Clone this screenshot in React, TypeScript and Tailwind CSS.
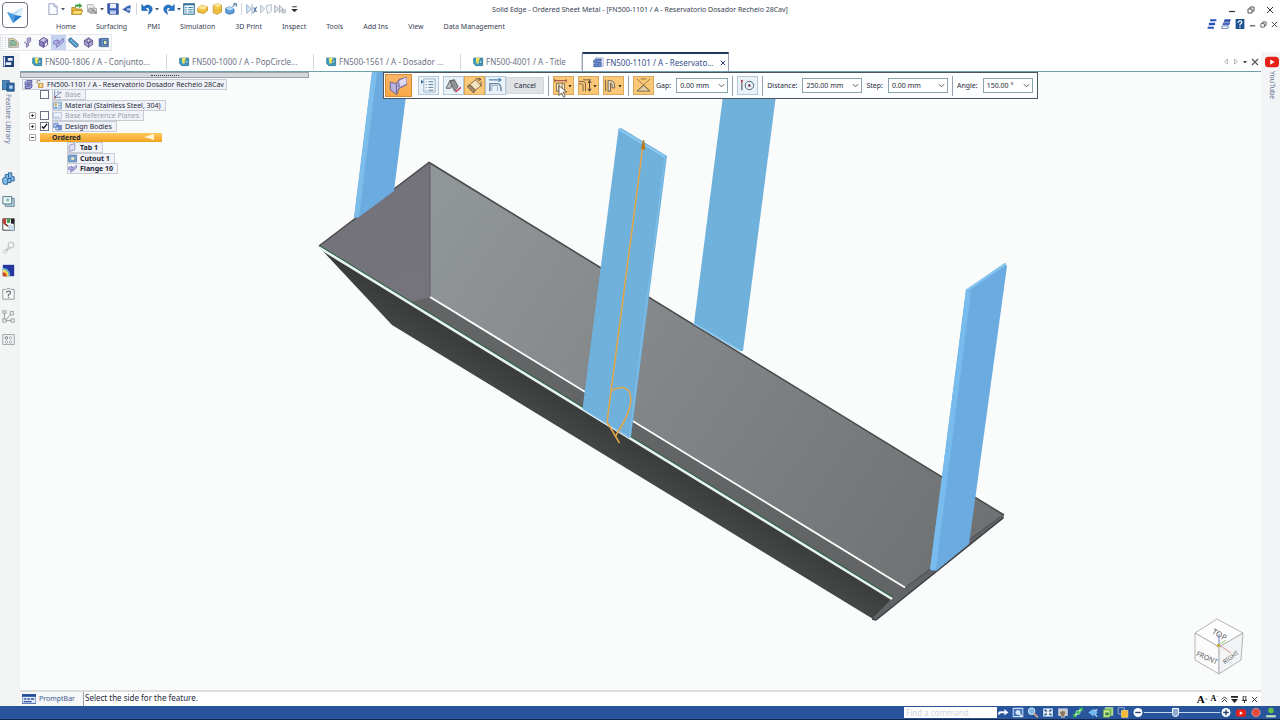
import { useState } from "react";
import type { ReactNode } from "react";

const icons: Record<string, ReactNode> = {
  newDoc: (
    <>
      <path d="M2.5 1h7l4 4v10.5h-11z" fill="#fbfcff" stroke="#7485ac" />
      <path d="M9.5 1v4h4" fill="#dfe6f4" stroke="#7485ac" />
    </>
  ),
  open: (
    <>
      <path d="M1 6h5l1 2h7v7H1z" fill="#e9b83c" stroke="#a4781c" />
      <path d="M4 10h12l-3 5H1z" fill="#ffdf72" stroke="#b1882a" />
      <path d="M5 6c0-4 3-5 6-4V0l4 4-4 3V5c-2-1-4 0-6 1z" fill="#3aa33a" />
    </>
  ),
  print: (
    <>
      <path d="M2 2h7l2 3v7H2z" fill="#ececec" stroke="#a2a2a2" />
      <path d="M6 7h8v7H6z" fill="#d2d2d2" stroke="#999" />
      <circle cx="6" cy="10" r="3" fill="#bdbdbd" stroke="#8f8f8f" />
      <path d="M9 9l5 5" stroke="#888" strokeWidth="2" />
    </>
  ),
  save: (
    <>
      <path d="M1 1h14v14H3l-2-2z" fill="#3f62b5" stroke="#27408a" />
      <path d="M4 1h8v6H4z" fill="#e6ecfa" />
      <path d="M4 10h8v5H4z" fill="#b9c8ea" />
    </>
  ),
  drop: (
    <>
      <path d="M1 9c4-2 7-6 12-6l-1 10c-3 1-5-3-11-4z" fill="#3d67b0" />
      <path d="M8 7h4v3H8z" fill="#b9cdf0" />
    </>
  ),
  undo: <path d="M1 2v8h8L6 7c3-2 6 0 5 4l-1 4c5-3 6-7 4-10-3-3-7-3-10 0z" fill="#2377cd" stroke="#134f98" strokeWidth=".7" />,
  redo: <path d="M15 2v8H7l3-3C7 5 4 7 5 11l1 4C1 12 0 8 2 5c3-3 7-3 10 0z" fill="#2377cd" stroke="#134f98" strokeWidth=".7" />,
  list: (
    <>
      <path d="M1 1h14v14H1z" fill="#e9f5fb" stroke="#35708f" strokeWidth="1.5" />
      <path d="M1 2h14" stroke="#35708f" strokeWidth="2" />
      <path d="M3 6h2M3 9h2M3 12h2M7 6h6M7 9h6M7 12h6" stroke="#3f87a6" strokeWidth="1.4" />
    </>
  ),
  yellowPart: (
    <>
      <path d="M1 7l5-4 8 2v5l-5 4-8-2z" fill="#f0bf3d" stroke="#c08a1b" />
      <path d="M1 7l5-4 8 2-5 4z" fill="#ffe58e" />
    </>
  ),
  yellowCyl: (
    <>
      <path d="M3 3l6-2 5 2v9l-6 3-5-2z" fill="#f3c64a" stroke="#c08a1b" />
      <path d="M3 3l6-2 5 2-6 2z" fill="#ffedaa" />
      <path d="M3 9l5 2 6-3" stroke="#d69d2a" fill="none" />
    </>
  ),
  bluePart: (
    <>
      <path d="M1 7l6-2 5 3v5l-6 2-5-2z" fill="#5c9fdc" stroke="#2d68aa" />
      <path d="M1 7l6-2 5 3-6 2z" fill="#b6dcf8" />
      <path d="M10 5l4-4M11 1h4v4" stroke="#4c6e92" strokeWidth="1.4" fill="none" />
    </>
  ),
  mirror: (
    <>
      <path d="M1 2v12l6-6z" fill="#dbe9f8" stroke="#7d9fc4" />
      <path d="M8 1v14" stroke="#7593b1" />
      <path d="M10 6l4 6M14 5l-4 8" stroke="#4d7099" strokeWidth="1.5" />
    </>
  ),
  mirror2: (
    <>
      <path d="M1 3v10l5-5z" fill="#f0f4f9" stroke="#8fa3bd" />
      <path d="M8 4l7-2v9l-5 3z" fill="#f6f8fb" stroke="#9caabd" />
    </>
  ),
  mirror3: (
    <>
      <path d="M1 3v10l5-5zM7 3v10l5-5z" fill="#e9edf2" stroke="#8d99aa" />
      <path d="M11 9h4v4h-4z" fill="#dfe4ea" stroke="#8d99aa" />
    </>
  ),
  cloudPart: (
    <>
      <path d="M1 2h8l6 6v7H1z" fill="#ecd694" stroke="#7b8aa5" />
      <path d="M4 5h5l3 3v4H4z" fill="#8dbf9c" stroke="#4d7f94" />
      <path d="M1 2v13h4z" fill="#7ba7ad" opacity=".5" />
    </>
  ),
  bend: (
    <>
      <path d="M6 2l5-1v5l-3 3v4l-3 2v-5l2-3z" fill="#b5add8" stroke="#62589b" />
      <path d="M5 6l-3 2 4 3" stroke="#62589b" fill="none" />
    </>
  ),
  cubePart: (
    <>
      <path d="M2 5l6-4 6 3v7l-6 4-6-3z" fill="#8a80bd" stroke="#4a437f" />
      <path d="M2 5l6-4 6 3-6 4z" fill="#cbc5ea" stroke="#4a437f" />
      <path d="M8 8v7" stroke="#4a437f" />
      <path d="M10 10l3-2v3l-3 2z" fill="#fff" />
    </>
  ),
  dimple: (
    <>
      <path d="M2 5l6-4 6 4v6l-6 4-6-4z" fill="#a79fcf" stroke="#48417a" />
      <path d="M2 5l6 4 6-4M8 9v6" stroke="#48417a" />
      <circle cx="8" cy="5" r="1.800" fill="#fff" stroke="#48417a" />
    </>
  ),
  flange: (
    <>
      <path d="M1 6l6-2 2 3 6-5v5l-6 5-4 3v-4l-4-1z" fill="#b7b1e6" stroke="#6b63ad" />
      <path d="M7 4v4l-2 3M9 7v4" stroke="#6b63ad" fill="none" />
    </>
  ),
  hem: (
    <>
      <path d="M1 3l3-2 11 10-1 3-3 1L1 6z" fill="#4c97c9" stroke="#24487c" />
      <path d="M3 4l10 9" stroke="#bfe2f5" />
    </>
  ),
  cutBook: (
    <>
      <path d="M1 2h3v12H1z" fill="#4a74ac" />
      <path d="M4 2h11v12H4z" fill="#6590c4" stroke="#2a4b7d" />
      <path d="M8 5h5v6H8z" fill="#e0ebb7" stroke="#2a4b7d" />
    </>
  ),
  asm: (
    <>
      <path d="M1 3h13v11H4l-3-3z" fill="#3f9dc4" stroke="#286d88" />
      <path d="M4 3h6l-1 8H5z" fill="#f4e45a" />
      <path d="M9 6h4v5H9z" fill="#8fd0e8" stroke="#286d88" />
    </>
  ),
  sheet: (
    <>
      <path d="M4 1h11v13H4z" fill="#edf1fb" stroke="#9aabcf" />
      <path d="M1 5l3-2h8v3H5v2h7v5l-2 1H1v-3h7V9H1z" fill="#6c90ce" stroke="#2d4f99" />
    </>
  ),
  treeSheet: (
    <>
      <path d="M2 4l3-3h9v4H6v2h8v6l-3 2H2v-4h8V9H2z" fill="#a3a6de" stroke="#37377f" strokeWidth="1.3" />
    </>
  ),
  lock: (
    <>
      <path d="M2 7V3a3 3 0 016 0" fill="none" stroke="#6c522f" strokeWidth="1.5" />
      <path d="M5 7h9v8H5z" fill="#f0b64c" stroke="#a16e1d" />
      <path d="M8 9h3v4H8z" fill="#fff1cc" />
    </>
  ),
  axes: (
    <>
      <path d="M3 1v12h11M3 13l9-8" stroke="#526fa4" strokeWidth="1.5" fill="none" />
      <path d="M7 2h3v3H7zM12 3h3v3h-3z" fill="#7b8fba" />
      <path d="M2 12h3v3H2z" fill="#b34c4c" />
    </>
  ),
  material: (
    <>
      <path d="M1 2h14v12H1z" fill="#e8f2fa" stroke="#39719f" />
      <path d="M3 4h4v4H3z" fill="#e09b2d" />
      <path d="M3 10h4v3H3z" fill="#4e93c0" />
      <path d="M9 5h5M9 8h5M9 11h5" stroke="#39719f" />
    </>
  ),
  plane: (
    <>
      <path d="M1 3h14v11H1z" fill="#eef2fa" stroke="#8fa5cc" />
      <path d="M3 11h2M6 11h2M9 11h2" stroke="#6d86b5" strokeWidth="1.5" />
    </>
  ),
  bodies: (
    <>
      <path d="M1 2h8v8H1z" fill="#a7bdea" stroke="#4b67ab" />
      <path d="M7 6h8v8H7z" fill="#7694d3" stroke="#3a579e" />
      <path d="M5 9h5v5H5z" fill="#dbe5fa" stroke="#4b67ab" />
    </>
  ),
  tab: <path d="M2 4l10-3v11L2 15z" fill="#dfe0f4" stroke="#8083b0" strokeWidth="1.3" />,
  cutout: (
    <>
      <path d="M1 2h14v12H1z" fill="#89b3df" stroke="#3b6aa2" strokeWidth="1.3" />
      <path d="M5 5h7v6H5z" fill="#f5f0cc" stroke="#3b6aa2" />
    </>
  ),
  railTree: (
    <>
      <path d="M0 0h16v16H0z" fill="#213f78" />
      <path d="M7 3h7v4H7zM4 9h8v4H4z" fill="#e9eef8" />
      <path d="M2 1v14" stroke="#e9eef8" strokeWidth="2" />
    </>
  ),
  railLib: (
    <>
      <path d="M0 2h9v11H0z" fill="#4e88bd" stroke="#275886" />
      <path d="M6 5h9v10H6z" fill="#2f68a7" stroke="#204d7f" />
      <path d="M9 8h4v4H9z" fill="#bcd8f0" />
    </>
  ),
  railFamily: (
    <path
      d="M1 8l3-2V3h4V1h4v4l3 1v5h-4v2H7v2H2l-1-2z M4 6l3 2h4M7 8v5M8 3v4M11 6v5"
      fill="#83bdea"
      stroke="#2d6499"
      strokeWidth="1.2"
    />
  ),
  railGallery: (
    <>
      <path d="M4 4h11v10H4z" fill="#b8d3df" stroke="#4d7589" />
      <path d="M1 2h11v9H1z" fill="#f0f8fa" stroke="#4d7589" strokeWidth="1.2" />
      <circle cx="7" cy="6" r="2" fill="#83bbb6" />
    </>
  ),
  railPaint: (
    <>
      <path d="M1 1h14v14H1z" fill="#fff" stroke="#222" />
      <path d="M1 1h4v6H1z" fill="#c13b35" />
      <path d="M6 1h4v5H6z" fill="#3d9c4d" />
      <path d="M11 1h4v6h-4z" fill="#20242a" />
      <path d="M3 7l10 7" stroke="#733" strokeWidth="2" />
      <path d="M7 10l4-2 4 4v3h-4z" fill="#c5def2" />
    </>
  ),
  railKey: (
    <>
      <circle cx="11" cy="5" r="3.5" fill="none" stroke="#c6c8ca" strokeWidth="1.6" />
      <path d="M9 8l-5 5" stroke="#c6c8ca" strokeWidth="3" />
      <circle cx="3.5" cy="13" r="2" fill="#f5f5f5" stroke="#c6c8ca" />
    </>
  ),
  railHeat: (
    <>
      <path d="M1 1h14v14H1z" fill="#26389d" />
      <path d="M1 5c6 0 9 4 9 10H1z" fill="#70b5d8" />
      <path d="M1 7c5 0 7 3 7 8H1z" fill="#f4dc4c" />
      <path d="M1 10c3 0 5 2 5 5H1z" fill="#d4442c" />
    </>
  ),
  railHelp: (
    <>
      <path d="M1 3h4l1-1h4l1 1h4v12H1z" fill="#f7f7f7" stroke="#868b90" />
      <path d="M5.500 7q0-2 2.500-2t2.500 2q0 1.500-2.500 2.500v1.500M8 12v1.500" stroke="#71777d" strokeWidth="1.5" fill="none" />
    </>
  ),
  railNodes: (
    <>
      <path d="M3 3v9M5 12l7-8M4 13h8" stroke="#868b90" fill="none" />
      <path d="M1 1h4v3H1zM10 2h4v4h-4zM1 11h4v4H1zM11 11h4v4h-4z" fill="#f7f7f7" stroke="#868b90" />
    </>
  ),
  railGrid: (
    <>
      <path d="M1 2h14v12H1z" fill="#fafafa" stroke="#868b90" />
      <circle cx="5.500" cy="6" r="1.600" fill="none" stroke="#555b61" />
      <circle cx="10.500" cy="6" r="1.600" fill="none" stroke="#9ba0a5" />
      <circle cx="5.500" cy="11" r="1.600" fill="none" stroke="#9ba0a5" />
      <circle cx="10.500" cy="11" r="1.600" fill="none" stroke="#9ba0a5" />
    </>
  ),
  cascade: (
    <>
      <path d="M5 2h10M3 8h10M1 14h10" stroke="#2652b8" strokeWidth="3" />
      <path d="M4 5h9M2 11h9" stroke="#9eb8ec" strokeWidth="1.5" />
    </>
  ),
  cascade2: (
    <>
      <path d="M6 1h9l-1 3H5z" fill="#2652b8" stroke="#1f4396" />
      <path d="M4 6h10l-1 3H3z" fill="#4f76cc" stroke="#1f4396" />
      <path d="M2 11h10l-1 4H1z" fill="#fff" stroke="#1f4396" />
    </>
  ),
  help: (
    <>
      <path d="M1 0h14v16H1z" fill="#1d5291" />
      <path d="M5 6q0-3 3-3t3 2.500q0 1.500-3 3v2M8 12v2" stroke="#fff" strokeWidth="2" fill="none" />
    </>
  ),
  youtube: (
    <>
      <rect x="0" y="2" width="16" height="12" rx="4" fill="#e62117" />
      <path d="M6 5l5 3-5 3z" fill="#fff" />
    </>
  ),
  cbFlange: (
    <>
      <path d="M1 5l5 1 2-3 6-2v6l-6 3-2 5-5-4z" fill="#b9b2dc" stroke="#615a8c" strokeWidth=".7" />
      <path d="M6 6v8M8 3v6" stroke="#615a8c" strokeWidth=".7" />
      <path d="M8 4l6-3v5l-5 2z" fill="#ded9f2" />
    </>
  ),
  cbOptions: (
    <>
      <path d="M3 1h12v14H3z" fill="#f2f8fc" stroke="#7ea0b5" strokeWidth=".8" />
      <path d="M5 4h1M5 7h1M5 10h1M5 13h1M8 4h5M8 7h5M8 10h5M8 13h5" stroke="#4b7590" />
      <path d="M0 2l3 2-3 2z" fill="#2c66a0" />
    </>
  ),
  cbEdge: (
    <>
      <path d="M0 11L4 3l5-1-4 9z" fill="#b9bdbf" stroke="#4c4f52" strokeWidth=".8" />
      <path d="M4 3l5-1 4 7-4 5z" fill="#8d9295" stroke="#4c4f52" strokeWidth=".8" />
      <path d="M10 15l6-5" stroke="#c22e45" strokeWidth="1.5" />
    </>
  ),
  cbSide: (
    <>
      <path d="M3 7l6-5 6 6-6 5z" fill="#f6e3c0" stroke="#66513a" strokeWidth=".8" />
      <path d="M0 9l3-2 6 6-2 3z" fill="#a58a63" stroke="#66513a" strokeWidth=".8" />
      <path d="M9 1h5M12 0l3 1.500-3 1.500M15 4v5" stroke="#3c3329" strokeWidth=".8" />
    </>
  ),
  cbProfile: (
    <>
      <path d="M2 14V6h8q4 0 4 8" fill="none" stroke="#6685a0" strokeWidth="1.5" />
      <path d="M4 14V8h6v6" fill="none" stroke="#97b1c6" />
      <path d="M1 2h13M11 0l3 2-3 2" fill="none" stroke="#21669f" />
    </>
  ),
  cbWidth: (
    <>
      <path d="M1 2h14M1 0v4M15 0v4" stroke="#8c3341" />
      <path d="M3 5h10v10H3z" fill="#f7ead0" stroke="#715c3d" />
      <path d="M6 5v10M10 5v10" stroke="#715c3d" />
    </>
  ),
  cbHeight: (
    <>
      <path d="M0 3h4q4 0 4 3v9M0 6h3q2 0 2 2v7" fill="none" stroke="#5c4a36" />
      <path d="M5 1h10" stroke="#5c4a36" />
      <path d="M13 3v11M11 5l2-3 2 3M11 12l2 3 2-3" fill="none" stroke="#222" />
    </>
  ),
  cbBend: (
    <>
      <path d="M2 1v14" stroke="#5a4a38" />
      <path d="M5 15V2h2q6 0 6 6v3h-3V8q0-3-2-3v10z" fill="#e9dfcd" stroke="#5a4a38" />
    </>
  ),
  cbCorner: (
    <>
      <path d="M1 1l14 13M15 1L1 14" stroke="#8c7248" />
      <path d="M1 14h14L8 8z" fill="#e2d0a8" stroke="#7c6848" />
      <path d="M5 1h6" stroke="#8c7248" />
    </>
  ),
  cbKey: (
    <>
      <path d="M2 3v10" stroke="#555" strokeWidth="1.2" />
      <path d="M1 2h2v2H1z" fill="#c22e45" />
      <circle cx="10" cy="8" r="4.500" fill="none" stroke="#4b5c6b" />
      <circle cx="10" cy="8" r="1.300" fill="#6d3043" />
    </>
  ),
  prompt: (
    <>
      <path d="M0 3h16v10H0z" fill="#e6eefb" stroke="#3359a3" />
      <path d="M0 4h16" stroke="#234a95" strokeWidth="3" />
      <path d="M2 8h3M6 8h3M10 8h4M2 11h9" stroke="#3359a3" strokeWidth="1.5" />
    </>
  ),
  sbArrow: <path d="M1 12V9q0-3 3-3h6V3l6 5-6 4V9H5z" fill="#f1f6ff" />,
  sbZoomArea: (
    <>
      <path d="M1 2h14v12H1z" fill="#3e73b8" stroke="#c7dbf4" strokeWidth="1.5" />
      <circle cx="8" cy="8" r="3" fill="#c8e2f4" stroke="#fff" />
      <path d="M10 10l4 4" stroke="#fff" strokeWidth="2" />
    </>
  ),
  sbZoom: (
    <>
      <circle cx="6" cy="6" r="4.500" fill="#7bb7e9" stroke="#cde2f8" strokeWidth="1.5" />
      <path d="M9 9l6 6" stroke="#d8a985" strokeWidth="2.500" />
    </>
  ),
  sbFit: (
    <>
      <path d="M1 2h14v12H1z" fill="#dceafa" />
      <path d="M3 4l10 8M13 4L3 12" stroke="#1d3f7a" strokeWidth="2" />
      <path d="M6 6h4v4H6z" fill="#fff" />
    </>
  ),
  sbPan: (
    <>
      <path d="M1 2h14v11H1z" fill="#c4cbd2" />
      <path d="M3 8q4-5 9-1l-2 8H6z" fill="#8a7562" stroke="#e8e0d4" />
    </>
  ),
  sbRotate: (
    <>
      <path d="M3 13L13 3" stroke="#b9f0bb" strokeWidth="3" />
      <path d="M1 9v6h6zM9 1h6v6z" fill="#3dbb4e" />
      <circle cx="8" cy="8" r="3" fill="#3dbb4e" stroke="#b9f0bb" />
    </>
  ),
  sbLook: (
    <>
      <path d="M1 8l8-6v4h5v4H9v4z" fill="#6fb6ee" />
      <path d="M9 6l5-2M10 10l4 4" stroke="#bde0fa" strokeWidth="2" />
    </>
  ),
  sbViews: (
    <>
      <path d="M4 1h11v11H4z" fill="#92d06c" stroke="#e0f4c9" />
      <path d="M1 4h10v11H1z" fill="#c8e88c" stroke="#3e7f39" />
      <path d="M4 8h5v4H4z" fill="#34853e" />
    </>
  ),
  sbStyle: (
    <>
      <path d="M1 1h9v9H1z" fill="#29529c" stroke="#c1d4f2" />
      <path d="M6 5h9v10H6z" fill="#f5b82e" stroke="#ffe08a" />
    </>
  ),
  sbMinus: (
    <>
      <circle cx="8" cy="8" r="6.500" fill="#fff" />
      <path d="M4 8h8" stroke="#24416f" strokeWidth="2" />
    </>
  ),
  sbPlus: (
    <>
      <circle cx="8" cy="8" r="6.500" fill="#fff" />
      <path d="M4 8h8M8 4v8" stroke="#24416f" strokeWidth="2" />
    </>
  ),
  sbRecord: <circle cx="8" cy="8" r="6" fill="#e34b3a" stroke="#f5ada5" />,
  sbUser: (
    <>
      <circle cx="8" cy="5" r="4" fill="#62c04a" />
      <path d="M1 12h14v3H1z" fill="#c9eabf" />
    </>
  ),
};

function Icon({ name, className = "size-3" }: { name: string; className?: string }) {
  return (
    <svg viewBox="0 0 16 16" className={`${className} flex-none`} fill="none" aria-hidden="true">
      {icons[name]}
    </svg>
  );
}

function Caret({ className = "w-2 text-gray-600" }: { className?: string }) {
  return (
    <svg viewBox="0 0 8 8" className={`${className} h-2 flex-none`} aria-hidden="true">
      <path d="M2 3h4L4 5.500z" fill="currentColor" />
    </svg>
  );
}

function IconButton({ name, label, caret = false }: { name: string; label: string; caret?: boolean }) {
  return (
    <button type="button" aria-label={label} className="flex items-center">
      <Icon name={name} />
      {caret && <Caret />}
    </button>
  );
}

function WindowButtons({ small = false }: { small?: boolean }) {
  const size = small ? "size-[7px]" : "size-2";
  return (
    <>
      <button type="button" aria-label="Minimize">
        <svg viewBox="0 0 8 8" className={size}><path d="M1 5.500h6" stroke="#333" strokeWidth="1.200" /></svg>
      </button>
      <button type="button" aria-label="Restore">
        <svg viewBox="0 0 8 8" className={size} fill="none" stroke="#555"><path d="M3 3V1h4v4H5M1 3h4v4H1z" /></svg>
      </button>
      <button type="button" aria-label="Close">
        <svg viewBox="0 0 8 8" className={size} stroke="#333"><path d="M1 1l6 6M7 1L1 7" /></svg>
      </button>
    </>
  );
}

const menus = ["Home", "Surfacing", "PMI", "Simulation", "3D Print", "Inspect", "Tools", "Add Ins", "View", "Data Management"];

function Header() {
  return (
    <header className="grid grid-cols-[30px_minmax(0,1fr)_auto_minmax(0,1fr)_30px] grid-rows-[18px_16px]">
      <button type="button" aria-label="Application menu" className="row-span-2 mt-0.5 ml-0.5 flex size-[26px] items-center justify-center rounded-sm border border-gray-500 bg-white">
        <svg viewBox="0 0 24 24" className="size-6" aria-hidden="true">
          <path d="M4 9l6 1 10-6-2 10-8 6z" fill="#b5daf4" />
          <path d="M4 9l8 3-2 8z" fill="#4a9ee0" />
          <path d="M10 20l2-8 7 1z" fill="#2679cc" />
          <path d="M12 12l8-8-1 9z" fill="#e1f1fb" />
        </svg>
      </button>
      <div className="flex items-center gap-1 pl-[17px]">
        <IconButton name="newDoc" label="New" caret />
        <div className="flex items-center gap-[3px]">
          <IconButton name="open" label="Open" />
          <IconButton name="print" label="Print" caret />
        </div>
        <div className="-ml-[3px] flex items-center gap-0.5">
          <IconButton name="save" label="Save" />
          <IconButton name="drop" label="Send" />
        </div>
        <span className="-ml-px h-3 w-px bg-gray-300" />
        <div className="flex items-center gap-0.5">
          <IconButton name="undo" label="Undo" caret />
          <IconButton name="redo" label="Redo" caret />
        </div>
        <div className="-ml-1 flex items-center gap-0.5">
          <IconButton name="list" label="Options" />
          <IconButton name="yellowPart" label="Part" />
          <IconButton name="yellowCyl" label="Extrude" />
          <IconButton name="bluePart" label="Convert" />
        </div>
        <span className="h-3 w-px bg-gray-300" />
        <div className="flex items-center gap-0.5">
          <IconButton name="mirror" label="Mirror" />
          <IconButton name="mirror2" label="Mirror plane" />
          <IconButton name="mirror3" label="Mirror body" />
        </div>
        <button type="button" aria-label="Customize">
          <svg viewBox="0 0 8 8" className="size-[9px]"><path d="M2 1h4v1H2zM1 3.500h6L4 6.500z" fill="#333" /></svg>
        </button>
      </div>
      <h1 className="self-center pt-px text-[7px] leading-3 whitespace-nowrap text-gray-700">
        Solid Edge - Ordered Sheet Metal - [FN500-1101 / A - Reservatorio Dosador Recheio 28Cav]
      </h1>
      <div className="col-span-2 flex items-center justify-end gap-[11px] pt-px pr-1.5">
        <WindowButtons />
      </div>
      <nav className="col-span-2 flex items-center gap-5 pt-px pl-[26px] text-[7px] leading-3 whitespace-nowrap text-gray-700">
        {menus.map((menu) => (
          <button type="button" key={menu}>{menu}</button>
        ))}
      </nav>
      <div className="col-span-2 flex items-center justify-end gap-1 pr-0.5 pb-1">
        <button type="button" aria-label="Arrange windows"><Icon name="cascade" className="size-[10px]" /></button>
        <button type="button" aria-label="Cascade windows"><Icon name="cascade2" className="size-[10px]" /></button>
        <button type="button" aria-label="Help"><Icon name="help" className="size-[10px]" /></button>
        <WindowButtons small />
      </div>
    </header>
  );
}

const tools = [
  { icon: "cloudPart", label: "Tab" },
  { icon: "bend", label: "Bend" },
  { icon: "cubePart", label: "Contour flange" },
  { icon: "flange", label: "Flange", active: true },
  { icon: "hem", label: "Hem" },
  { icon: "dimple", label: "Dimple" },
  { icon: "cutBook", label: "Cut" },
];

function ToolStrip() {
  return (
    <div className="flex">
      <div className="flex h-[17px] items-center border border-gray-200 bg-gray-50 pl-px">
        <span className="h-3 w-1 border-x border-dotted border-gray-300" />
        {tools.map((tool) => (
          <button
            type="button"
            key={tool.label}
            aria-label={tool.label}
            className={`${tool.active ? "bg-[#c6d3f0]" : ""} flex h-[15px] w-[15px] items-center justify-center`}
          >
            <Icon name={tool.icon} className="size-[11px]" />
          </button>
        ))}
      </div>
    </div>
  );
}

const documents = [
  { name: "FN500-1806 / A - Conjunto...", icon: "asm", width: "w-[147px]" },
  { name: "FN500-1000 / A - PopCircle...", icon: "asm", width: "w-[147px]" },
  { name: "FN500-1561 / A - Dosador ...", icon: "asm", width: "w-[147px]" },
  { name: "FN500-4001 / A - Title", icon: "asm", width: "w-[121px]" },
];

function DocumentTabs() {
  return (
    <div className="flex h-5 flex-none items-stretch border-b border-[#6f9fb0] bg-white text-[8px] leading-3 whitespace-nowrap text-gray-500">
      {documents.map((doc) => (
        <button type="button" key={doc.name} className={`${doc.width} flex items-center gap-0.5 pl-3`}>
          <Icon name={doc.icon} className="size-[11px]" />
          <span className="flex-1 text-left">{doc.name}</span>
          <span className="h-4 w-px bg-gray-300" />
        </button>
      ))}
      <div className="flex w-[147px] items-center border-x border-t-2 border-x-gray-400 border-t-[#1e3a63] pl-2.5 text-[#34508c]">
        <button type="button" className="flex flex-1 items-center gap-0.5">
          <Icon name="sheet" className="size-[11px]" />
          FN500-1101 / A - Reservato...
        </button>
        <button type="button" aria-label="Close tab" className="px-0.5">
          <svg viewBox="0 0 8 8" className="size-[6px]" stroke="#2b3f75" strokeWidth="1.300"><path d="M1 1l6 6M7 1L1 7" /></svg>
        </button>
      </div>
      <div className="flex flex-1 items-center justify-end gap-0.5 pr-0.5">
        <button type="button" aria-label="Previous tab"><svg viewBox="0 0 8 8" className="size-[7px]" fill="none" stroke="#aaa"><path d="M5 1L2 4l3 3z" /></svg></button>
        <button type="button" aria-label="Next tab"><svg viewBox="0 0 8 8" className="size-[7px]" fill="none" stroke="#aaa"><path d="M3 1l3 3-3 3z" /></svg></button>
        <button type="button" aria-label="Tab list"><Caret className="w-2 text-gray-700" /></button>
        <button type="button" aria-label="Close all"><svg viewBox="0 0 8 8" className="size-2" stroke="#555" strokeWidth="1.200"><path d="M1 1l6 6M7 1L1 7" /></svg></button>
      </div>
    </div>
  );
}

function Model() {
  return (
    <svg viewBox="20 72 1241 618" preserveAspectRatio="xMidYMid slice" className="absolute inset-0 h-full w-full" fill="none" role="img" aria-label="Sheet metal model">
      <defs>
        <linearGradient id="wall" x1="430" y1="200" x2="960" y2="560" gradientUnits="userSpaceOnUse">
          <stop offset="0" stopColor="#919699" />
          <stop offset="1" stopColor="#6f7273" />
        </linearGradient>
        <linearGradient id="end" x1="380" y1="190" x2="420" y2="320" gradientUnits="userSpaceOnUse">
          <stop offset="0" stopColor="#74727b" />
          <stop offset="1" stopColor="#75747c" />
        </linearGradient>
        <linearGradient id="front" x1="600" y1="420" x2="570" y2="470" gradientUnits="userSpaceOnUse">
          <stop offset="0" stopColor="#3a3b3b" />
          <stop offset="1" stopColor="#505353" />
        </linearGradient>
      </defs>
      <path d="M430 162L1004 515L905 588L430 298Z" fill="url(#wall)" />
      <path d="M430 162L319 246L430 315Z" fill="url(#end)" />
      <path d="M430 297L410 302L892 599L905 588Z" fill="#626465" />
      <path d="M319 247L392 325L873 619L893 599Z" fill="url(#front)" />
      <path d="M905 587L1003 514L1004 518L876 620L872 619L892 598Z" fill="#626369" />
      <path d="M1003 518L876 620L872 619" stroke="#3f4044" strokeWidth="1.500" />
      <path d="M905 588L1000 517" stroke="#48494c" strokeWidth=".8" />
      <path d="M319 246L429 162.500L1004 515" stroke="#4a4b4d" strokeWidth="1.500" />
      <path d="M430 163V297" stroke="#5f6064" />
      <path d="M430 297L905 587.500" stroke="#fff" strokeWidth="1.800" />
      <path d="M319 245.500L892 597" stroke="#276440" strokeWidth="1.200" />
      <path d="M319 247.500L892 599" stroke="#e6f2ef" strokeWidth="2.600" />
      {/* left flange */}
      <path d="M372 72H409L394 191L359 217L354 218Z" fill="#6cabdf" />
      <path d="M372 72L354 218L359 217L377 72Z" fill="#7dbdec" />
      {/* back flange */}
      <path d="M726 72H779L743 351L740 351L694 323.500Z" fill="#70b1db" />
      <path d="M694 323.500L741 351" stroke="#87c7f0" strokeWidth="1.500" />
      {/* middle flange */}
      <path d="M618.500 129L621 128L667 156L631 437L629 438L582.500 409Z" fill="#70b1db" />
      <path d="M618.500 129L665 157" stroke="#8acbf3" strokeWidth="2" />
      <path d="M665 158L629.500 437L583 409" stroke="#81c0ea" />
      {/* right flange */}
      <path d="M1005 263L1007 266L969 544L936 571L930 570L966 290Z" fill="#6cabe0" />
      <path d="M966 291L1005.500 264" stroke="#83c3ee" strokeWidth="2.500" />
      <path d="M966 290L971 291L936 569L930 570Z" fill="#78bbed" />
      <g stroke="#e4a747" strokeWidth="1.500">
        <path d="M643 145L607 422L619.500 443" />
        <path d="M611 391Q623 384 629 391C635 404 625 421 615 437" />
        <path d="M641.500 149L643.500 140L645 149Z" fill="#b47a1c" stroke="#b47a1c" strokeWidth="1" />
      </g>
      {/* view cube */}
      <g strokeWidth=".9" strokeLinejoin="round" stroke="#a9acb0">
        <path d="M1195 633L1217 619L1243 633L1219 647Z" fill="#fefefe" />
        <path d="M1195 633L1219 647V674L1195 660Z" fill="#fbfbfb" />
        <path d="M1219 647L1243 633L1241 660L1219 674Z" fill="#f2f3f4" />
      </g>
      <g fontSize="8" fill="#5a5e63" fontFamily="Noto Sans, sans-serif" textAnchor="middle">
        <text transform="translate(1218 637) rotate(30)">TOP</text>
        <text transform="translate(1206 660) rotate(24)" fontSize="7">FRONT</text>
        <text transform="translate(1232 659) rotate(-36)" fontSize="6">RIGHT</text>
      </g>
      <path d="M1219 645V634" stroke="#6c78c8" />
      <path d="M1219 645L1226 640" stroke="#8fc879" />
      <path d="M1219 645L1231 653" stroke="#d99a93" />
      <path d="M1217 644h3v3h-3z" fill="#c5b247" />
    </svg>
  );
}

const treeItems = [
  { label: "Base", icon: "axes", check: false, muted: true },
  { label: "Material (Stainless Steel, 304)", icon: "material" },
  { label: "Base Reference Planes", icon: "plane", expander: "+", check: false, muted: true },
  { label: "Design Bodies", icon: "bodies", expander: "+", check: true },
];

const features = [
  { label: "Tab 1", icon: "tab" },
  { label: "Cutout 1", icon: "cutout" },
  { label: "Flange 10", icon: "flange" },
];

function Expander({ open = false }: { open?: boolean }) {
  return (
    <button type="button" aria-label={open ? "Collapse" : "Expand"}>
      <svg viewBox="0 0 7 7" className="size-[7px]" fill="none">
        <path d="M.500 .500h6v6h-6z" fill="#fff" stroke="#aaa" />
        <path d={open ? "M2 3.500h3" : "M2 3.500h3M3.500 2v3"} stroke="#444" />
      </svg>
    </button>
  );
}

function PathFinder() {
  const [checked, setChecked] = useState<Record<string, boolean>>({ "Design Bodies": true });

  return (
    <section className="relative w-[289px] text-[7px] leading-[9px] text-gray-800" aria-label="PathFinder">
      <div className="flex h-[6px] items-center justify-center border border-gray-400 bg-[#d5d7d9]">
        <span className="w-7 border-t border-dotted border-gray-700" />
      </div>
      <ul className="mt-px grid h-[95px] auto-rows-fr items-center whitespace-nowrap">
        <li className="flex pl-0.5">
          <span className="flex items-center gap-[3px] border border-[#c8ccd4] bg-[#f0f2f7] px-px pr-0.5">
            <Icon name="treeSheet" className="size-[9px]" />
            <Icon name="lock" className="size-[8px]" />
            FN500-1101 / A - Reservatorio Dosador Recheio 28Cav
          </span>
        </li>
        {treeItems.map((item) => (
          <li key={item.label} className="flex items-center pl-[9px]">
            <span className="flex w-[11px]">{item.expander && <Expander />}</span>
            <label className="flex items-center">
              <span className="flex w-3">
                {item.check !== undefined && (
                  <input
                    type="checkbox"
                    checked={!!checked[item.label]}
                    onChange={(e) => setChecked({ ...checked, [item.label]: e.target.checked })}
                    className="size-[9px] appearance-none border border-gray-500 bg-white bg-center bg-no-repeat checked:bg-[url('data:image/svg+xml,%3Csvg%20xmlns=%22http://www.w3.org/2000/svg%22%20viewBox=%220%200%208%208%22%3E%3Cpath%20d=%22M1%204l2%202%204-5%22%20fill=%22none%22%20stroke=%22%23111%22%20stroke-width=%221.5%22/%3E%3C/svg%3E')]"
                  />
                )}
              </span>
              <span className={`${item.muted ? "text-gray-400" : ""} flex items-center gap-[3px] border border-[#c8ccd4] bg-[#f0f2f7] pr-1`}>
                <Icon name={item.icon} className="size-[9px]" />
                {item.label}
              </span>
            </label>
          </li>
        ))}
        <li className="flex items-center gap-1 pl-[9px]">
          <Expander open />
          <span className="flex w-[122px] items-center justify-between bg-linear-to-b from-[#ffc95c] to-[#f0a21c] pr-2 pl-3 font-bold">
            Ordered
            <svg viewBox="0 0 10 6" className="h-[6px] w-[10px]"><path d="M0 3l10-3v6z" fill="#fff4d6" /></svg>
          </span>
        </li>
        {features.map((feature) => (
          <li key={feature.label} className="flex pl-[47px] font-bold">
            <span className="flex items-center gap-[3px] border border-[#c8ccd4] bg-[#f0f2f7] pr-1">
              <Icon name={feature.icon} className="size-[9px]" />
              {feature.label}
            </span>
          </li>
        ))}
      </ul>
    </section>
  );
}

function BarButton({ name, label, active = false, caret = false }: { name: string; label: string; active?: boolean; caret?: boolean }) {
  return (
    <button
      type="button"
      aria-label={label}
      className={`${active ? "border-[#d8a95c] bg-[#fbc878]" : "border-[#b5c8d8] bg-[#eaf2f9]"} flex h-[19px] w-[21px] items-center justify-center border`}
    >
      <Icon name={name} className={caret ? "size-[13px]" : "size-[15px]"} />
      {caret && <Caret className="w-[6px] text-black" />}
    </button>
  );
}

function BarField({ label, value, width }: { label: string; value: string; width: string }) {
  const [text, setText] = useState(value);
  return (
    <label className="flex items-center gap-[5px]">
      {label}
      <span className={`${width} flex h-[15px] items-center border border-[#8ba3ad] bg-white pr-0.5 pl-[3px]`}>
        <input value={text} onChange={(e) => setText(e.target.value)} className="w-0 min-w-0 flex-1 outline-none" />
        <svg viewBox="0 0 8 8" className="size-[7px]" fill="none" stroke="#444"><path d="M1 2.500l3 3 3-3" /></svg>
      </span>
    </label>
  );
}

function Divider() {
  return <span className="h-5 w-px bg-gray-400" />;
}

function CommandBar() {
  return (
    <div className="absolute top-0 left-[363px] flex h-[27px] items-center gap-1 border border-[#4a5560] bg-[#fcfdfe] pr-1 pl-px text-[7px] leading-3 whitespace-nowrap text-gray-800">
      <button type="button" aria-label="Flange" className="mr-0.5 flex h-[23px] w-[27px] items-center justify-center border border-[#d88c34] bg-linear-to-b from-[#f9b46a] to-[#fba944]">
        <Icon name="cbFlange" className="size-5" />
      </button>
      <BarButton name="cbOptions" label="Flange options" />
      <div className="flex">
        <BarButton name="cbEdge" label="Edge step" />
        <BarButton name="cbSide" label="Side step" active />
        <BarButton name="cbProfile" label="Profile step" />
        <button type="button" className="h-[17px] w-[38px] self-center border border-gray-300 bg-[#dfe1e4]">Cancel</button>
      </div>
      <Divider />
      <BarButton name="cbWidth" label="Full width" active caret />
      <BarButton name="cbHeight" label="Measure outside" active caret />
      <BarButton name="cbBend" label="Material inside" active caret />
      <Divider />
      <div className="flex items-center gap-0.5">
        <BarButton name="cbCorner" label="Corner relief" active />
        <BarField label="Gap:" value="0.00 mm" width="w-[52px]" />
      </div>
      <Divider />
      <BarButton name="cbKey" label="Key points" />
      <Divider />
      <BarField label="Distance:" value="250.00 mm" width="w-[60px]" />
      <BarField label="Step:" value="0.00 mm" width="w-[60px]" />
      <Divider />
      <BarField label="Angle:" value="150.00 °" width="w-[50px]" />
      <svg viewBox="0 0 10 16" className="pointer-events-none absolute top-3 left-[174px] h-[14px] w-[9px]" aria-hidden="true">
        <path d="M1 1v11l3-3 2 5 2-1-2-5h4z" fill="#fff" stroke="#333" strokeWidth=".8" />
      </svg>
    </div>
  );
}

const railItems = [
  { icon: "railFamily", label: "Family of parts" },
  { icon: "railGallery", label: "Layers" },
  { icon: "railPaint", label: "Styles" },
  { icon: "railKey", label: "Sensors" },
  { icon: "railHeat", label: "Simulation" },
  { icon: "railHelp", label: "Help" },
  { icon: "railNodes", label: "Relations" },
  { icon: "railGrid", label: "Playback" },
];

function LeftRail() {
  return (
    <aside className="flex w-5 flex-none flex-col items-center bg-[#f3f4f4] pr-1 text-[7px] leading-3 text-[#5f7394]">
      <button type="button" aria-label="PathFinder" className="mt-1"><Icon name="railTree" className="size-[11px]" /></button>
      <button type="button" className="mt-3 flex h-[70px] flex-col items-center gap-0.5">
        <Icon name="railLib" className="size-[13px]" />
        <span className="[writing-mode:vertical-rl]">Feature Library</span>
      </button>
      <div className="mt-[23px] flex flex-col gap-2.5">
        {railItems.map((item) => (
          <button type="button" key={item.label} aria-label={item.label}>
            <Icon name={item.icon} className="size-[13px]" />
          </button>
        ))}
      </div>
    </aside>
  );
}

function RightRail() {
  return (
    <aside className="flex w-[19px] flex-none flex-col items-end bg-[#f3f4f5] text-[7px] leading-3 text-[#5f7394]">
      <button type="button" className="mt-[3px] flex flex-col items-center gap-0.5 pr-px">
        <Icon name="youtube" className="size-[14px]" />
        <span className="[writing-mode:vertical-rl]">YouTube</span>
      </button>
    </aside>
  );
}

function PromptBar() {
  return (
    <div className="flex h-4 flex-none items-stretch border-t-2 border-[#dcdddd] bg-white text-[8px] leading-3 text-gray-800">
      <div className="flex w-[63px] items-center gap-[3px] bg-[#f6f7f8] pl-0.5 text-[7px] text-[#43598f]">
        <Icon name="prompt" className="size-[14px]" />
        PromptBar
      </div>
      <p className="flex-1 border-l border-gray-400 pl-px">Select the side for the feature.</p>
      <div className="flex items-center gap-[3px] pr-[3px] font-['Liberation_Serif',serif] text-black">
        <button type="button" aria-label="Increase text size" className="text-[11px] font-bold">A<sup className="text-[5px]">^</sup></button>
        <button type="button" aria-label="Decrease text size" className="text-[8px] font-bold">A<sup className="text-[5px]">ˇ</sup></button>
        <button type="button" aria-label="Collapse"><svg viewBox="0 0 8 8" className="size-[7px]" fill="none" stroke="#222"><path d="M1 4l3-3 3 3M1 7l3-3 3 3" /></svg></button>
        <button type="button" aria-label="More"><svg viewBox="0 0 8 8" className="size-[7px]"><path d="M0 0h8v2H0zM0 3.500h8L4 8z" fill="#222" /></svg></button>
        <button type="button" aria-label="Pin"><svg viewBox="0 0 8 8" className="size-[7px]" fill="none" stroke="#222"><path d="M2.500 0h3v5h-3zM1 5h6M4 5v3" /></svg></button>
        <button type="button" aria-label="Close"><svg viewBox="0 0 8 8" className="size-[7px]" stroke="#222"><path d="M1 1l6 6M7 1L1 7" /></svg></button>
      </div>
    </div>
  );
}

const viewTools = [
  { icon: "sbArrow", label: "Run command" },
  { icon: "sbZoomArea", label: "Zoom area" },
  { icon: "sbZoom", label: "Zoom" },
  { icon: "sbFit", label: "Fit" },
  { icon: "sbPan", label: "Pan" },
  { icon: "sbRotate", label: "Rotate" },
  { icon: "sbLook", label: "Look at face" },
  { icon: "sbViews", label: "Views" },
  { icon: "sbStyle", label: "View style" },
  { icon: "sbMinus", label: "Zoom out" },
];

function StatusBar() {
  return (
    <footer className="flex h-[14px] flex-none items-center justify-end border-b border-[#10264d] bg-[#27549b]">
      <input aria-label="Find a command" placeholder="Find a command" className="h-[11px] w-[93px] bg-white px-0.5 text-[8px] leading-[11px] placeholder:text-gray-300" />
      <div className="flex items-center gap-[3px]">
        {viewTools.map((tool) => (
          <button type="button" key={tool.label} aria-label={tool.label}>
            <Icon name={tool.icon} className="h-[11px] w-3" />
          </button>
        ))}
      </div>
      <input
        type="range"
        aria-label="Zoom level"
        defaultValue={40}
        className="h-[11px] w-[76px] appearance-none bg-transparent [&::-webkit-slider-runnable-track]:h-px [&::-webkit-slider-runnable-track]:bg-[#c5d4ee] [&::-webkit-slider-thumb]:-mt-1 [&::-webkit-slider-thumb]:h-[9px] [&::-webkit-slider-thumb]:w-[7px] [&::-webkit-slider-thumb]:appearance-none [&::-webkit-slider-thumb]:rounded-b-sm [&::-webkit-slider-thumb]:border [&::-webkit-slider-thumb]:border-white [&::-webkit-slider-thumb]:bg-[#8ea9d6]"
      />
      <div className="flex items-center gap-[3px] pr-[3px]">
        <button type="button" aria-label="Zoom in"><Icon name="sbPlus" className="h-[11px] w-3" /></button>
        <button type="button" aria-label="YouTube"><Icon name="youtube" className="h-[10px] w-3" /></button>
        <button type="button" aria-label="Record"><Icon name="sbRecord" className="h-[11px] w-3" /></button>
        <button type="button" aria-label="Account"><Icon name="sbUser" className="h-[11px] w-3" /></button>
      </div>
    </footer>
  );
}

export default function App() {
  return (
    <div className="flex h-screen flex-col overflow-hidden bg-white font-['Noto_Sans',sans-serif]">
      <Header />
      <ToolStrip />
      <div className="flex min-h-0 flex-1 pt-px">
        <LeftRail />
        <main className="flex min-w-0 flex-1 flex-col">
          <DocumentTabs />
          <div className="relative min-h-0 flex-1 overflow-hidden bg-[#fafbfb]">
            <Model />
            <PathFinder />
            <CommandBar />
          </div>
          <PromptBar />
        </main>
        <RightRail />
      </div>
      <StatusBar />
    </div>
  );
}
